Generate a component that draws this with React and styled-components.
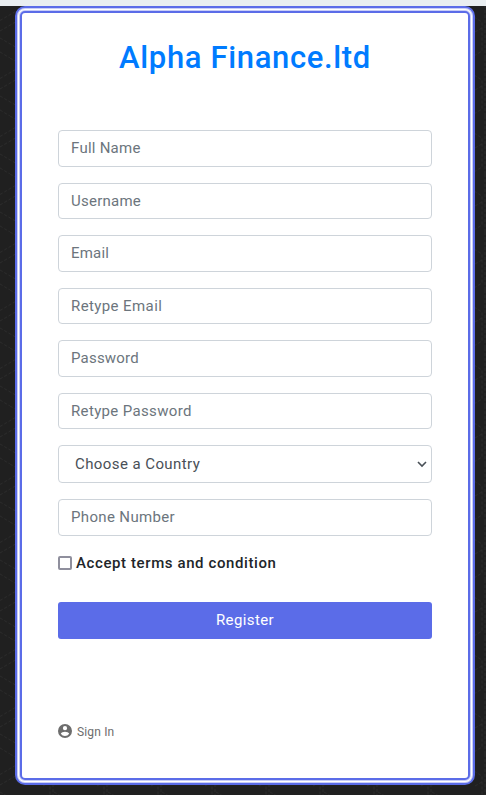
import React from "react";
import styled, { createGlobalStyle, css } from "styled-components";

const Global = createGlobalStyle`
  *, *::before, *::after { box-sizing: border-box; }
  html { background: #212121; }
  body { margin: 0; font-family: Roboto, "Liberation Sans", sans-serif; font-size: 15px; line-height: 1.5; color: #212529; overflow: hidden; }
`;

const Page = styled.div`
  position: relative;
  height: 795px;
  background: #202020;
  overflow: hidden;
`;
const Backdrop = styled.svg`
  position: absolute;
  inset: 0;
  width: 100%;
  height: 100%;
`;
const TopBar = styled.div`
  position: relative;
  height: 6px;
  background: #e9eef1;
`;
const Card = styled.main`
  position: relative;
  width: 460px;
  height: 779px;
  margin-left: 15px;
  padding: 29px 41px 0;
  background: #fff;
  border: 2px solid #5b6ce8;
  border-radius: 10px;
  box-shadow:
    inset 0 0 0 1px #c8cdf7,
    inset 0 0 0 2px #fff,
    inset 0 0 0 3px #c8cdf7,
    inset 0 0 0 5px #5b6ce8;
`;
const Title = styled.h1`
  margin: 0;
  height: 93px;
  text-align: center;
  font-size: 31px;
  font-weight: 500;
  line-height: 42px;
  letter-spacing: 0.65px;
  color: #007bff;
  white-space: nowrap;
`;
const Form = styled.form`
  display: flex;
  flex-direction: column;
`;
const control = css`
  width: 100%;
  margin: 0 0 16px;
  border: 1px solid #ced4da;
  border-radius: 4px;
  background: #fff;
  font: inherit;
`;
const Input = styled.input`
  ${control}
  height: 36.5px;
  padding: 6px 12px;
  letter-spacing: ${(p) => p.$track || 0}px;
  &::placeholder { color: #6c757d; opacity: 1; }
`;
const SelectBox = styled.div`
  ${control}
  display: flex;
  align-items: center;
  justify-content: space-between;
  height: 38px;
  padding: 0 4px 0 16px;
  color: #495057;
  letter-spacing: 0.42px;
`;
const Terms = styled.label`
  display: flex;
  align-items: center;
  gap: 4px;
  height: 23px;
  font-weight: 500;
  white-space: nowrap;
  letter-spacing: 0.6px;
`;
const Box = styled.span`
  width: 14px;
  height: 14px;
  border: 2px solid #8f8f9d;
  border-radius: 2px;
`;
const Register = styled.button`
  height: 37px;
  margin: 27px 0 0;
  padding: 0;
  border: 0;
  border-radius: 3px;
  background: #5b6ce8;
  color: #fff;
  font: inherit;
  letter-spacing: 0.4px;
`;
const SignIn = styled.a`
  display: flex;
  align-items: center;
  gap: 5px;
  margin-top: 83px;
  height: 18px;
  font-size: 12px;
  letter-spacing: 0.15px;
  color: #6d6d6d;
`;
const SignInLabel = styled.span`
  padding-top: 2px;
`;

const fields = [
  ["Full Name", 0.25],
  ["Username", 0.25],
  ["Email", 0.2],
  ["Retype Email", 0.4],
  ["Password", 0.2],
  ["Retype Password", 0.35],
];

export default function App() {
  return (
    <Page>
      <Global />
      <Backdrop aria-hidden="true">
        <defs>
          <pattern id="cubes" width="54" height="58" patternUnits="userSpaceOnUse">
            <path
              d="M0 20.5L24 6.5M0 31L24 17M0 38L24 52M0 52L10 58M10 0L24 8M42 17L50 22V51L42 56M50 28L42 32.500M53 0V58"
              fill="none"
              stroke="#2b2b2b"
              strokeDasharray="3 2"
            />
          </pattern>
        </defs>
        <rect width="100%" height="100%" fill="url(#cubes)" />
      </Backdrop>
      <TopBar />
      <Card>
        <Title>Alpha Finance.ltd</Title>
        <Form>
          {fields.map(([name, track]) => (
            <Input key={name} placeholder={name} $track={track} />
          ))}
          <SelectBox role="combobox">
            Choose a Country
            <svg width="10" height="8" viewBox="0 0 10 8" fill="none" stroke="#495057" strokeWidth="1.6">
              <path d="M1 2L5 6L9 2" />
            </svg>
          </SelectBox>
          <Input placeholder="Phone Number" $track={0.35} />
          <Terms>
            <Box />
            Accept terms and condition
          </Terms>
          <Register type="button">Register</Register>
        </Form>
        <SignIn>
          <svg width="14" height="14" viewBox="2 2 20 20" fill="currentColor">
            <path d="M12 2a10 10 0 1 0 0 20 10 10 0 0 0 0-20zm0 3a3 3 0 1 1 0 6 3 3 0 0 1 0-6zm0 14.2a7.2 7.2 0 0 1-6-3.22c.03-1.99 4-3.08 6-3.08s5.97 1.09 6 3.08a7.2 7.2 0 0 1-6 3.22z" />
          </svg>
          <SignInLabel>Sign In</SignInLabel>
        </SignIn>
      </Card>
    </Page>
  );
}
